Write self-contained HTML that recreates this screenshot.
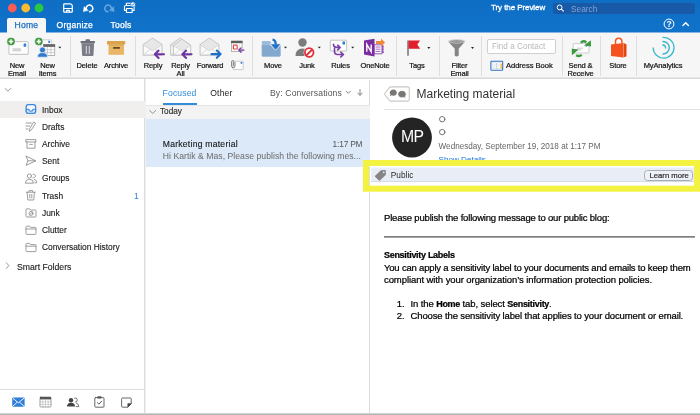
<!DOCTYPE html>
<html><head><meta charset="utf-8"><title>Outlook</title>
<style>
*{box-sizing:border-box;margin:0;padding:0}
html,body{width:700px;height:415px;overflow:hidden;background:#fff;font-family:"Liberation Sans",sans-serif;color:#1f1f1f}
.abs,.abs *{position:absolute}
#app{position:relative;width:700px;height:415px;overflow:hidden;background:#fff;will-change:transform}
.t{position:absolute;white-space:nowrap;line-height:1}
/* title bar */
#title{left:0;top:0;width:700px;height:32px;background:linear-gradient(#0e6ec4,#1172ca)}
.tl{position:absolute;top:3.5px;width:9px;height:9px;border-radius:50%}
#tabHome{position:absolute;left:7px;top:18px;width:39px;height:15px;background:#f6f6f6;border-radius:2px 2px 0 0}
.tab{font-size:8.6px;letter-spacing:.2px;color:#fff;top:20.8px;-webkit-text-stroke:.25px #fff}
#search{position:absolute;left:553px;top:3px;width:142px;height:11px;background:#185aa8;border-radius:2px}
/* ribbon */
#ribbon{position:absolute;left:0;top:32px;width:700px;height:47px;background:#f6f6f6;border-bottom:1px solid #d8d8d8;box-shadow:inset 0 -1px 0 #e8e8e8}
.sep{position:absolute;top:36px;width:1px;height:40px;background:#dedede}
.rl{font-size:7.5px;letter-spacing:-.13px;color:#111;-webkit-text-stroke:.2px #111;text-align:center;transform:translateX(-50%);line-height:8.1px;white-space:pre}
/* sidebar */
#side{position:absolute;left:0;top:79px;width:146px;height:336px;background:#fff;border-right:1px solid #efefef}
#side:after{content:"";position:absolute;left:144px;top:0;width:1px;height:336px;background:#dcdcdc}
.fr{font-size:8.4px;color:#1a1a1a;left:42px;-webkit-text-stroke:.12px #1a1a1a}
/* list */
#list{position:absolute;left:146px;top:80px;width:224px;height:335px;background:#fff;border-right:1px solid #dcdcdc}
/* read */
#read{position:absolute;left:371px;top:80px;width:329px;height:335px;background:#fff}
.body{font-size:9.5px;color:#000;left:384px;-webkit-text-stroke:.22px #000}
.bb{font-weight:bold;font-size:9px;letter-spacing:-.3px}
svg{position:absolute;overflow:visible}
</style></head><body>
<div id="app">

<!-- TITLE BAR -->
<div id="title" class="abs">
  <svg style="left:0;top:0" width="60" height="16" viewBox="0 0 60 16"><circle cx="12.300" cy="8" r="4.400" fill="#fc5b57"/><circle cx="25.700" cy="8" r="4.400" fill="#fdbc2e"/><circle cx="39" cy="8" r="4.400" fill="#2ac841"/></svg>
  <div id="tabHome"></div>
  <div class="t tab" style="left:14.5px;color:#1a6fc2;-webkit-text-stroke:.25px #1a6fc2">Home</div>
  <div class="t tab" style="left:56.5px">Organize</div>
  <div class="t tab" style="left:110.5px">Tools</div>
  <div class="t" style="left:491px;top:4px;font-size:8px;letter-spacing:-.08px;color:#fff;-webkit-text-stroke:.3px #fff">Try the Preview</div>
  <div id="search"></div>
  <div class="t" style="left:666.6px;top:19.8px;font-size:8.6px;color:#fff;font-weight:bold">?</div>
  <div class="t" style="left:571px;top:4.5px;font-size:8.3px;color:#7fa4d2">Search</div>
</div>

<!-- RIBBON -->
<div style="position:absolute;left:0;top:32px;width:700px;height:1px;background:#86b4e2;z-index:1"></div>
<div style="position:absolute;left:7px;top:32px;width:39px;height:1px;background:#f6f6f6;z-index:1"></div>
<div id="ribbon"></div>
<div class="sep" style="left:70px"></div>
<div class="sep" style="left:135px"></div>
<div class="sep" style="left:252px"></div>
<div class="sep" style="left:396px"></div>
<div class="sep" style="left:439px"></div>
<div class="sep" style="left:481px"></div>
<div class="sep" style="left:562px"></div>
<div class="sep" style="left:600px"></div>
<div class="sep" style="left:636px"></div>

<div class="t rl" style="left:17px;top:62px">New
Email</div>
<div class="t rl" style="left:47.5px;top:62px">New
Items</div>
<div class="t rl" style="left:87px;top:62px">Delete</div>
<div class="t rl" style="left:116px;top:62px">Archive</div>
<div class="t rl" style="left:153px;top:62px">Reply</div>
<div class="t rl" style="left:180.5px;top:62px">Reply
All</div>
<div class="t rl" style="left:210px;top:62px">Forward</div>
<div class="t rl" style="left:273px;top:62px">Move</div>
<div class="t rl" style="left:307px;top:62px">Junk</div>
<div class="t rl" style="left:340.5px;top:62px">Rules</div>
<div class="t rl" style="left:375px;top:62px">OneNote</div>
<div class="t rl" style="left:417px;top:62px">Tags</div>
<div class="t rl" style="left:459.5px;top:62px">Filter
Email</div>
<div style="position:absolute;left:487px;top:39px;width:69px;height:15px;background:#fff;border:1px solid #cfcfcf;border-radius:2px"></div>
<div class="t" style="left:492px;top:42.5px;font-size:8.2px;color:#b9b9b9">Find a Contact</div>
<div class="t" style="left:506px;top:62.3px;font-size:7.6px;letter-spacing:-.05px;color:#111;-webkit-text-stroke:.2px #111">Address Book</div>
<div class="t rl" style="left:580.5px;top:62px">Send &amp;
Receive</div>
<div class="t rl" style="left:618px;top:62px">Store</div>
<div class="t rl" style="left:663px;top:62px">MyAnalytics</div>

<!-- RIBBON ICONS -->
<svg id="ic1" style="left:0;top:0" width="700" height="415" viewBox="0 0 700 415" fill="none">
<!-- title bar icons -->
<g stroke="#fff" fill="none" stroke-linejoin="round" stroke-linecap="round">
  <path d="M63.700 4.600q0-.7.700-.7h6.400l1.500 1.500v6q0 .7-.7.700h-7.200q-.7 0-.7-.7z" stroke-width="1.200"/>
  <path d="M64 8.500h8" stroke-width="1"/>
  <path d="M66.600 12v-1.600h2.800V12" stroke-width="1.100"/>
  <path d="M86.200 8.600a3.300 3.300 0 1 1 3.400 3.100" stroke-width="1.500"/>
  <path d="M83.400 11.400l.6-4.800 4.200 3.600z" fill="#fff" stroke-width=".4"/>
  <g opacity=".38"><path d="M111.400 8.600a3.300 3.300 0 1 0-3.400 3.100" stroke-width="1.500"/>
  <path d="M114.200 11.400l-.6-4.800-4.200 3.600z" fill="#fff" stroke-width=".4"/></g>
  <path d="M126.400 5.400V3.200h5.200v1.200" stroke-width="1.100"/>
  <path d="M126.400 10.400h-1.900V6.600q0-1.100 1.100-1.100h7.400q1.100 0 1.100 1.100v3.800h-1.900" stroke-width="1.100"/>
  <path d="M126.500 8.500h5.700v4h-5.700z" stroke-width="1.100"/>
  <circle cx="133" cy="4.400" r="2.500" fill="#fff" stroke="#186fc4" stroke-width=".6"/>
  <path d="M131.900 4.400l.8.900 1.500-1.800" stroke="#186fc4" stroke-width=".8"/>
</g>
<!-- search icon -->
<circle cx="559.6" cy="7.4" r="2.4" stroke="#fff" stroke-width="1"/><path d="M561.4 9.2l2 2" stroke="#fff" stroke-width="1.1" stroke-linecap="round"/>
<!-- help + caret -->
<circle cx="669" cy="24" r="4.9" stroke="#fff" stroke-width="1"/>
<path d="M683 25.4l2.7-2.7 2.7 2.7" stroke="#fff" stroke-width="1.4" stroke-linecap="round" stroke-linejoin="round"/>

<!-- New Email -->
<rect x="8.800" y="54" width="19.600" height="1" rx=".5" fill="#d9d9d9"/>
<rect x="8.900" y="41.600" width="19.400" height="12.700" rx="1.200" fill="#fdfdfd" stroke="#bfbfbf" stroke-width=".9"/>
<rect x="23.600" y="43.600" width="2.600" height="3.200" rx=".4" fill="#2f7fd8"/>
<rect x="12.600" y="48.200" width="8.400" height="3.200" fill="#d4d4d4"/>
<circle cx="11" cy="41.500" r="4.100" fill="#3f9a3d" stroke="#f6f6f6" stroke-width=".5"/>
<path d="M11 39.300v4.400M8.800 41.500h4.400" stroke="#fff" stroke-width="1.500" stroke-linecap="butt"/>
<!-- New Items -->
<rect x="41" y="39.800" width="10.600" height="7.600" rx=".6" fill="#fdfdfd" stroke="#c6c6c6" stroke-width=".8"/>
<rect x="48.300" y="40.800" width="1.800" height="2.200" fill="#2f7fd8"/>
<rect x="43.700" y="44.600" width="11" height="10.800" fill="#fff" stroke="#a2a2a2" stroke-width=".8"/>
<rect x="43.300" y="44.200" width="11.800" height="2.700" fill="#666"/>
<path d="M47.400 47v8.200M51 47v8.200M43.700 49.800h11M43.700 52.600h11" stroke="#b0b0b0" stroke-width=".6"/>
<circle cx="42.500" cy="50" r="3" fill="#2e7bd0" stroke="#f6f6f6" stroke-width=".7"/>
<path d="M37.400 57.200q0-4.600 5.100-4.600t5.100 4.600z" fill="#2e7bd0" stroke="#f6f6f6" stroke-width=".7"/>
<circle cx="38.800" cy="41.500" r="4.100" fill="#3f9a3d" stroke="#f6f6f6" stroke-width=".5"/>
<path d="M38.800 39.300v4.400M36.600 41.500h4.400" stroke="#fff" stroke-width="1.500" stroke-linecap="butt"/>
<path d="M58.300 46.800h3l-1.500 1.800z" fill="#222"/>
<!-- Delete -->
<path d="M81.500 43.200h12.600l-.6 11.900q-.1.900-1 .9h-9.400q-.9 0-1-.9z" fill="#7d7c89"/>
<rect x="80.500" y="41" width="14.500" height="2.300" rx=".7" fill="#6f6e7b"/>
<rect x="85.500" y="39.300" width="4.500" height="2.200" rx=".8" fill="#6f6e7b"/>
<path d="M86.300 46v8M89.300 46v8" stroke="#d3d2da" stroke-width="1.100" stroke-linecap="butt"/>
<!-- Archive -->
<rect x="107" y="41" width="18.200" height="3.600" rx=".4" fill="#dda349"/>
<rect x="108.500" y="44.500" width="15.500" height="10.300" fill="#e9b667"/>
<rect x="108.500" y="44.500" width="15.500" height=".8" fill="#cf9a48"/>
<rect x="113" y="47" width="7" height="1.700" rx=".5" fill="#6a4a1f"/>
<!-- Reply -->
<g><path d="M143.200 44.800l9.400-6.700 9.400 6.700v10.300h-18.800z" fill="#fafafa" stroke="#c6c6c6" stroke-width="1.100" stroke-linejoin="round"/>
<path d="M143.600 45l9-6.300 9 6.300-9 5.600z" fill="#e7e7e7"/>
<path d="M143.400 45l9.200 5.800 9.200-5.800M143.600 54.800l6.600-5.600M161.600 54.800l-6.600-5.600" stroke="#cfcfcf" stroke-width=".8" fill="none"/></g>
<path d="M164 54.200h-8M158.600 50.600l-3.800 3.600 3.800 3.700" stroke="#6f34a4" stroke-width="2.100" stroke-linecap="round" stroke-linejoin="round"/>
<!-- Reply All -->
<g transform="translate(27.500 0)"><path d="M143.200 44.800l9.400-6.700 9.400 6.700v10.300h-18.800z" fill="#fafafa" stroke="#c6c6c6" stroke-width="1.100" stroke-linejoin="round"/>
<path d="M143.600 45l9-6.300 9 6.300-9 5.600z" fill="#e7e7e7"/>
<path d="M143.400 45l9.200 5.800 9.200-5.800M143.600 54.800l6.600-5.600M161.600 54.800l-6.600-5.600" stroke="#cfcfcf" stroke-width=".8" fill="none"/></g>
<g transform="translate(41.700 4.300) scale(.92)"><path d="M143.200 44.800l9.400-6.700 9.400 6.700v10.300h-18.800z" fill="#fafafa" stroke="#c6c6c6" stroke-width="1.100" stroke-linejoin="round"/>
<path d="M143.600 45l9-6.300 9 6.300-9 5.600z" fill="#e7e7e7"/>
<path d="M143.400 45l9.200 5.800 9.200-5.800M143.600 54.800l6.600-5.600M161.600 54.800l-6.600-5.600" stroke="#cfcfcf" stroke-width=".8" fill="none"/></g>
<path d="M191.500 54.200h-8M186.100 50.600l-3.800 3.600 3.800 3.700" stroke="#6f34a4" stroke-width="2.100" stroke-linecap="round" stroke-linejoin="round"/>
<!-- Forward -->
<g transform="translate(56.900 0)"><path d="M143.200 44.800l9.400-6.700 9.400 6.700v10.300h-18.800z" fill="#fafafa" stroke="#c6c6c6" stroke-width="1.100" stroke-linejoin="round"/>
<path d="M143.600 45l9-6.300 9 6.300-9 5.600z" fill="#e7e7e7"/>
<path d="M143.400 45l9.200 5.800 9.200-5.800M143.600 54.800l6.600-5.600M161.600 54.800l-6.600-5.600" stroke="#cfcfcf" stroke-width=".8" fill="none"/></g>
<path d="M211.400 54.100h8.400M216.800 50.500l3.800 3.600-3.800 3.700" stroke="#1f6fc8" stroke-width="2.100" stroke-linecap="round" stroke-linejoin="round"/>
<!-- small: meeting -->
<rect x="231.500" y="41.200" width="10.600" height="10.300" fill="#fff" stroke="#a2a2a2" stroke-width=".8"/>
<rect x="231.100" y="40.800" width="11.400" height="2.400" fill="#5c5c5c"/>
<path d="M239.600 43.400v8M231.600 48h10.400" stroke="#d6d6d6" stroke-width=".5"/>
<rect x="233.400" y="45.200" width="3.800" height="3.800" rx=".6" fill="#fff" stroke="#e04a4a" stroke-width="1.200"/>
<path d="M244 50.100h-4.600M241 48l-2.300 2.100 2.300 2.200" stroke="#7b3fa6" stroke-width="1.300" stroke-linecap="round" stroke-linejoin="round"/>
<!-- small: attachment -->
<rect x="233" y="61.200" width="10.200" height="8.400" rx=".5" fill="#fdfdfd" stroke="#c2c2c2" stroke-width=".8"/>
<rect x="240.600" y="62" width="1.700" height="1.700" fill="#2f7fd8"/>
<path d="M235 62.600v3.400a1.700 1.700 0 0 1-3.400 0v-4.400a1.050 1.050 0 0 1 2.100 0v4" stroke="#6e6e6e" stroke-width=".85" stroke-linecap="round" fill="none"/>
<!-- Move -->
<path d="M261.800 42q0-1 1-1h6.600q.6 0 1 .5l1.800 2.500h7.300q1 0 1 1v10.500q0 1-1 1h-16.700q-1 0-1-1z" fill="#9bbcda"/>
<path d="M261.800 45.200h18.700v10.300q0 1-1 1h-16.700q-1 0-1-1z" fill="#82a9cd"/>
<path d="M269.800 44.600l5.700 6 5.900-6.200-2-5h-6z" fill="#f6f6f6"/>
<path d="M272.500 39.600q3.200.3 3.200 4.800" stroke="#2272c8" stroke-width="2.400" fill="none" stroke-linecap="butt"/>
<path d="M271.300 44.400h8.600l-4.300 5z" fill="#2272c8" stroke="#2272c8" stroke-width=".6" stroke-linejoin="round"/>
<path d="M284 46.800h3l-1.500 1.800z" fill="#222"/>
<!-- Junk -->
<circle cx="302.500" cy="42.500" r="4.200" fill="#7c7c7c"/>
<path d="M295.500 56q0-7.600 7-7.600t7 7.600z" fill="#7c7c7c"/>
<circle cx="309.200" cy="52.500" r="5.600" fill="#f6f6f6"/>
<circle cx="309.200" cy="52.500" r="4.300" fill="#fff" stroke="#e0313a" stroke-width="1.800"/>
<path d="M306.200 55.500l6-6" stroke="#e0313a" stroke-width="1.800"/>
<path d="M317.800 46.800h3l-1.500 1.800z" fill="#222"/>
<!-- Rules -->
<rect x="330.300" y="40.200" width="16.400" height="10.800" rx=".6" fill="#fdfdfd" stroke="#bdbdbd" stroke-width=".9"/>
<rect x="342.500" y="41.500" width="2.500" height="3" rx=".3" fill="#2f7fd8"/>
<path d="M333.500 44.200q0 3.200 3 3.200h3M337.700 45.200l2.500 2.300-2.500 2.300" stroke="#7a3fa8" stroke-width="1.600" stroke-linecap="round" stroke-linejoin="round" fill="none"/>
<path d="M334.500 48.500v3q0 3 3 3h5.700M340.800 52.200l2.700 2.300-2.700 2.400" stroke="#7a3fa8" stroke-width="1.600" stroke-linecap="round" stroke-linejoin="round" fill="none"/>
<path d="M351.200 46.800h3l-1.500 1.800z" fill="#222"/>
<!-- OneNote -->
<path d="M374 44.800h8v9h-8z" fill="#fff" stroke="#8a3fae" stroke-width=".9"/>
<path d="M375.500 47h5M375.500 49.200h5M375.500 51.400h5" stroke="#8a3fae" stroke-width=".8"/>
<path d="M382 45.500h1.600v2.200H382zM382 48.200h1.600v2.200H382zM382 50.900h1.600v2.200H382z" fill="#8a3fae"/>
<path d="M364 40.500l10.500-1.800v17.800l-10.500-2z" fill="#7b2c9e"/>
<path d="M366.800 51.800v-7.400l4.400 7.400v-7.400" stroke="#fff" stroke-width="1.400" fill="none" stroke-linejoin="miter"/>
<path d="M376 41.100h5v-2.700l4.100 4.200-4.100 4.200v-2.700h-5z" fill="#f0883a"/>
<!-- Tags flag -->
<path d="M408 40.400v15.400" stroke="#444" stroke-width="1.100" stroke-linecap="butt"/>
<path d="M408.500 40.400h11.600l-2.800 4.100 2.800 4.200h-11.600z" fill="#e0202c"/>
<path d="M427.300 47.100h3l-1.500 1.800z" fill="#222"/>
<!-- Filter -->
<path d="M448 41.200l6.700 7.600v6.800q0 .8 2 .8t2-.8v-6.800l6.700-7.600z" fill="#858585"/>
<ellipse cx="456.700" cy="41.300" rx="8.700" ry="2.200" fill="#d4d4d4"/>
<ellipse cx="456.700" cy="41.500" rx="7.200" ry="1.400" fill="#9a9a9a"/>
<path d="M471 47.100h3l-1.500 1.800z" fill="#222"/>
<!-- Address book -->
<rect x="490.900" y="61.300" width="11.800" height="9" rx=".8" fill="#fff" stroke="#2f6fc0" stroke-width="1.100"/>
<path d="M492.200 62.800q2.300-.8 4.500.4q2.200-1.200 4.500-.4v5.800q-2.300-.8-4.500.4q-2.200-1.200-4.500-.4z" fill="#fcfcfc" stroke="#c4cede" stroke-width=".5"/>
<path d="M496.700 63.200v6" stroke="#9fb2d0" stroke-width=".6"/>
<path d="M493.200 64.400h2.400M493.200 65.800h2.400M493.200 67.200h2.400M497.900 64.400h2M497.900 65.800h2" stroke="#d0d8e6" stroke-width=".5"/>
<rect x="500.600" y="63.600" width="1.500" height="5.200" fill="#f0c040"/>
<!-- Send & Receive -->
<rect x="573.200" y="43.600" width="15.800" height="9.400" rx=".6" fill="#fdfdfd" stroke="#c2c2c2" stroke-width=".8"/>
<path d="M577 48.200h6M577 50h4.500" stroke="#b5b5b5" stroke-width=".7"/>
<circle cx="586.300" cy="46.200" r=".8" fill="#5a9be0"/>
<path d="M580.800 42.800q2.200-2.700 5.600-.6" stroke="#3a9a3c" stroke-width="2.300" fill="none"/>
<path d="M584 45.400l6.800-5.200.2 6.400z" fill="#3a9a3c"/>
<path d="M581.700 54.700q-2.200 2.400-5.600.5" stroke="#3a9a3c" stroke-width="2.300" fill="none"/>
<path d="M578.600 49.600l-6.700 5.700-.2-6.500z" fill="#3a9a3c"/>
<!-- Store -->
<path d="M615.500 44.200v-2.700a3.200 3.300 0 0 1 6.400 0v2" stroke="#f25a1d" stroke-width="1.500" fill="none"/>
<path d="M611 44.600l12.500-1.700v14.700l-12.500-1.700z" fill="#f4511e"/>
<path d="M623.500 42.900l3 1.300v12.100l-3 1.300z" fill="#e4450f"/>
<path d="M623.500 43.500v13.600" stroke="#f9a27c" stroke-width=".5"/>
<!-- MyAnalytics -->
<g stroke="#3db8cc" stroke-linecap="round" fill="none">
<path d="M663 37.300a10.400 10.400 0 1 1-9.800 10.600" stroke-width="1.300"/>
<path d="M663 41.400a6.300 6.300 0 0 1 0 12.600" stroke-width="1.500"/>
<path d="M662.800 45a3 3 0 0 1 2.800 3" stroke-width="1.300"/>
</g>
</svg>

<!-- SIDEBAR -->
<div id="side"></div>
<div style="position:absolute;left:0;top:101px;width:145px;height:17px;background:#f0efee"></div>
<div class="t fr" style="top:105.5px">Inbox</div>
<div class="t fr" style="top:122.7px">Drafts</div>
<div class="t fr" style="top:139.9px">Archive</div>
<div class="t fr" style="top:157.1px">Sent</div>
<div class="t fr" style="top:174.3px">Groups</div>
<div class="t fr" style="top:191.5px">Trash</div>
<div class="t fr" style="top:208.7px">Junk</div>
<div class="t fr" style="top:225.9px">Clutter</div>
<div class="t fr" style="top:243.1px">Conversation History</div>
<div class="t fr" style="top:262.7px;left:16.9px;font-size:8.7px">Smart Folders</div>
<div class="t" style="left:134px;top:191.5px;font-size:8.4px;color:#2a7fd6">1</div>
<div style="position:absolute;left:0;top:389px;width:145px;height:1px;background:#dedede"></div>

<!-- LIST -->
<div id="list"></div>
<div class="t" style="left:162.6px;top:88.5px;font-size:8.6px;letter-spacing:.13px;color:#2f8bd8">Focused</div>
<div class="t" style="left:210.3px;top:88.5px;font-size:8.6px;letter-spacing:.13px;color:#222">Other</div>
<div class="t" style="left:270px;top:88.5px;font-size:8.6px;letter-spacing:.13px;color:#555">By: Conversations</div>
<div style="position:absolute;left:162.5px;top:103px;width:34.5px;height:1.5px;background:#338dda"></div>
<div style="position:absolute;left:146px;top:104.5px;width:224px;height:14.5px;background:#f3f3f3;border-top:1px solid #e4e4e4"></div>
<div class="t" style="left:160px;top:108.4px;font-size:8.2px;color:#2e2e2e;-webkit-text-stroke:.15px #2e2e2e">Today</div>
<div style="position:absolute;left:146px;top:119px;width:224px;height:47.5px;background:#dbe9f8"></div>
<div class="t" style="left:162.8px;top:139.8px;font-size:8.6px;letter-spacing:.24px;color:#151515;-webkit-text-stroke:.12px #151515">Marketing material</div>
<div class="t" style="left:332.6px;top:139.8px;font-size:8.4px;letter-spacing:-.2px;color:#555">1:17 PM</div>
<div class="t" style="left:162.8px;top:151.9px;font-size:8.65px;letter-spacing:.03px;color:#6b6b6b">Hi Kartik &amp; Mas, Please publish the following mes...</div>

<!-- READING PANE -->
<div id="read"></div>
<div class="t" style="left:416.5px;top:87.5px;font-size:12px;color:#333">Marketing material</div>
<div style="position:absolute;left:384px;top:108.5px;width:316px;height:1px;background:#e3e3e3"></div>
<svg style="left:0;top:0" width="700" height="415" viewBox="0 0 700 415"><circle cx="412" cy="137.500" r="19.900" fill="#242424"/></svg>
<div class="t" style="left:400.9px;top:129.3px;font-size:15.8px;letter-spacing:-.55px;color:#fff">MP</div>
<div class="t" style="left:438.6px;top:143.2px;font-size:8.13px;color:#666">Wednesday, September 19, 2018 at 1:17 PM</div>
<div class="t" style="left:438.6px;top:156.4px;font-size:8.1px;color:#1a73e0">Show Details</div>

<!-- sensitivity bar + yellow highlight -->
<div style="position:absolute;left:371px;top:166px;width:329px;height:20px;background:#fff"></div>
<svg style="left:0;top:0" width="700" height="415" viewBox="0 0 700 415"><rect x="371" y="167.500" width="323.500" height="14.400" fill="#e9edf6"/><rect x="371" y="181" width="323.500" height=".9" fill="#d3d8e4"/></svg>
<div class="t" style="left:390.8px;top:171px;font-size:8.3px;color:#2b2b2b">Public</div>
<div style="position:absolute;left:644px;top:170px;width:49px;height:11px;border:1px solid #a9adb5;border-radius:3.5px;background:#eef1f8"></div>
<div class="t" style="left:649.5px;top:172px;font-size:7.7px;color:#2b2b2b;-webkit-text-stroke:.2px #2b2b2b">Learn more</div>
<svg style="left:0;top:0" width="700" height="415" viewBox="0 0 700 415"><rect x="366" y="163" width="331.100" height="25.700" fill="none" stroke="#f4f240" stroke-width="6"/></svg>

<!-- body -->
<div class="t body" style="top:213.1px;letter-spacing:-.19px">Please publish the following message to our public blog:</div>
<svg style="left:0;top:0" width="700" height="415" viewBox="0 0 700 415"><rect x="384" y="236.300" width="311" height="1.200" fill="#4a4a4a"/></svg>
<div class="t body bb" style="top:250.6px">Sensitivity Labels</div>
<div class="t body" style="top:262.7px;letter-spacing:-.19px">You can apply a sensitivity label to your documents and emails to keep them</div>
<div class="t body" style="top:274.6px;letter-spacing:-.08px">compliant with your organization’s information protection policies.</div>
<div class="t body" style="top:298.5px;left:396.8px;letter-spacing:-.15px">1.</div>
<div class="t body" style="top:298.5px;left:410.5px;letter-spacing:-.1px">In the <b class="bb">Home</b> tab, select <b class="bb">Sensitivity</b>.</div>
<div class="t body" style="top:311.1px;left:396.8px;letter-spacing:-.15px">2.</div>
<div class="t body" style="top:311.1px;left:410.5px;letter-spacing:-.13px">Choose the sensitivity label that applies to your document or email.</div>

<!-- ICONS 2 -->
<svg id="ic2" style="left:0;top:0" width="700" height="415" viewBox="0 0 700 415" fill="none" stroke-linecap="round" stroke-linejoin="round">
<!-- sidebar chevrons -->
<path d="M5.200 88.600l2.700 2.600 2.700-2.600" stroke="#8a8a8a" stroke-width=".9"/>
<path d="M6.300 262.800l2.600 2.800-2.600 2.800" stroke="#8a8a8a" stroke-width=".9"/>
<!-- Inbox -->
<rect x="26.100" y="104.700" width="9.600" height="8.700" rx="2.300" fill="#f3f8fe" stroke="#3a86e0" stroke-width="1.200"/>
<path d="M26.300 109.300h2.500q.3 1.900 2.100 1.900t2.100-1.900h2.500v2.200q0 1.700-1.700 1.700h-5.800q-1.700 0-1.700-1.700z" fill="#d2e3f8" stroke="#3a86e0" stroke-width="1.100"/>
<!-- Drafts -->
<g stroke="#8c8c8c" stroke-width=".85">
<path d="M26 123h5.400M26 126h3.600M26 129h2"/>
<path d="M34 122.200l1.600 1-4.400 7-1.900 1.200.3-2.200z"/>
<!-- Archive -->
<path d="M26.200 139.600h9.600v2.400h-9.600zM27 142v6.200h8v-6.200M29.600 144.400h2.800"/>
<!-- Sent -->
<path d="M26.200 156.200l9.600 4.600-9.600 4.600 1.600-4.600zM27.800 160.800h7.600"/>
<!-- Groups -->
<circle cx="29.400" cy="176" r="2.100"/><path d="M25.400 182.800q0-3.600 4-3.600t4 3.600z"/>
<path d="M33 174.200a1.900 1.900 0 1 1 0 3.600M34.400 179.400q2.400.4 2.400 3.400h-2"/>
<!-- Trash -->
<path d="M26.200 192.200h9.200M29 192v-1.400h3.600V192M27.200 192.400l.6 7.600h6l.6-7.600M29.800 194.400v3.600M31.800 194.400v3.600"/>
<!-- Junk -->
<path d="M26 209.600q0-.8.800-.8h2.800l1 1.200h4.600q.8 0 .8.800v5.400q0 .8-.8.800h-8.400q-.8 0-.8-.8z"/>
<circle cx="31" cy="213.400" r="2"/><path d="M29.600 214.800l2.800-2.800"/>
<!-- Clutter -->
<path d="M26 227q0-.8.800-.8h2.800l1 1.200h4.600q.8 0 .8.800v5.400q0 .8-.8.800h-8.400q-.8 0-.8-.8zM26 229h10"/>
<!-- Conv history -->
<path d="M26 244.200q0-.8.800-.8h2.800l1 1.200h4.600q.8 0 .8.800v5.400q0 .8-.8.800h-8.400q-.8 0-.8-.8zM26 246.200h10"/>
</g>
<!-- bottom nav -->
<rect x="12.200" y="397.600" width="12.400" height="9.200" rx="1" fill="#2f7fd8"/>
<path d="M13 398.400l5.400 4.400 5.400-4.400M13 406l4-3.600M23.800 406l-4-3.600" stroke="#fff" stroke-width=".9"/>
<rect x="40" y="397" width="11" height="10" rx=".8" fill="#fff" stroke="#8a8a8a" stroke-width=".8"/>
<rect x="40" y="397" width="11" height="2.400" fill="#555"/>
<path d="M42.800 399.400v7.600M45.500 399.400v7.600M48.200 399.400v7.600M40 401.900h11M40 404.400h11" stroke="#aaa" stroke-width=".5"/>
<circle cx="71" cy="400.200" r="2.200" fill="#444"/><path d="M67 406.600q0-3.800 4-3.800t4 3.800z" fill="#444"/>
<path d="M74.600 398a2.100 2.100 0 1 1 .8 4.100M76.400 403q2.400.6 2.400 3.600h-2.600" stroke="#555" stroke-width=".8"/>
<rect x="94.800" y="397.600" width="9.200" height="9.600" rx=".8" fill="#fff" stroke="#555" stroke-width=".9"/>
<rect x="97.400" y="396.200" width="4" height="2.400" rx=".5" fill="#555"/>
<path d="M97.400 402.600l1.600 1.600 2.600-3" stroke="#444" stroke-width=".9"/>
<path d="M121.600 398.800q0-.8.800-.8h8q.8 0 .8.800v5l-3.400 3.400h-5.400q-.8 0-.8-.8z" fill="#fff" stroke="#555" stroke-width=".9"/>
<path d="M131.200 403.800l-3.400 3.400v-3.400z" fill="#444" stroke="#444" stroke-width=".6"/>
<!-- list header -->
<path d="M346.200 91.200l2.100 2.100 2.100-2.100" stroke="#777" stroke-width=".9"/>
<path d="M360 89.600v5.400M357.800 93l2.200 2.400 2.200-2.400" stroke="#777" stroke-width=".9"/>
<path d="M149.600 110.400l3.100 3 3.100-3" stroke="#888" stroke-width=".9"/>
<!-- conversation icon -->
<path d="M384.300 94l5-6.400q.6-.7 1.500-.7h17q1.500 0 1.500 1.500v11.200q0 1.500-1.500 1.500h-17q-.9 0-1.500-.7z" stroke="#cbc8c5" stroke-width="1.100" fill="#fff"/>
<path d="M393.300 89.500a3.500 3.100 0 1 1-1.700 5.800l-1.800 1 .6-1.900a3.500 3.100 0 0 1 2.900-4.900z" fill="#7a7673"/>
<path d="M401.900 90.400a4.200 3.700 0 1 0 2 7l2 1.200-.6-2.200a4.200 3.700 0 0 0-3.400-6z" fill="#7a7673" stroke="#fff" stroke-width=".7"/>
<circle cx="442.200" cy="119.200" r="2.700" stroke="#666" stroke-width=".9" fill="#fff"/>
<circle cx="442.200" cy="132.100" r="2.700" stroke="#666" stroke-width=".9" fill="#fff"/>
<!-- tag icon -->
<path d="M381 170.200l4.200-.2.600.600.100 4.200-6 5.800q-.5.400-1 0l-3.800-3.800q-.4-.5 0-1z" fill="#858585"/>
<circle cx="383.700" cy="172.300" r=".9" fill="#e9edf6"/>
</svg>

<div style="position:absolute;left:0;top:413px;width:700px;height:1px;background:#d2d2d2"></div><div style="position:absolute;left:0;top:414px;width:700px;height:1px;background:#b6b6b6"></div>
</div>
</body></html>
